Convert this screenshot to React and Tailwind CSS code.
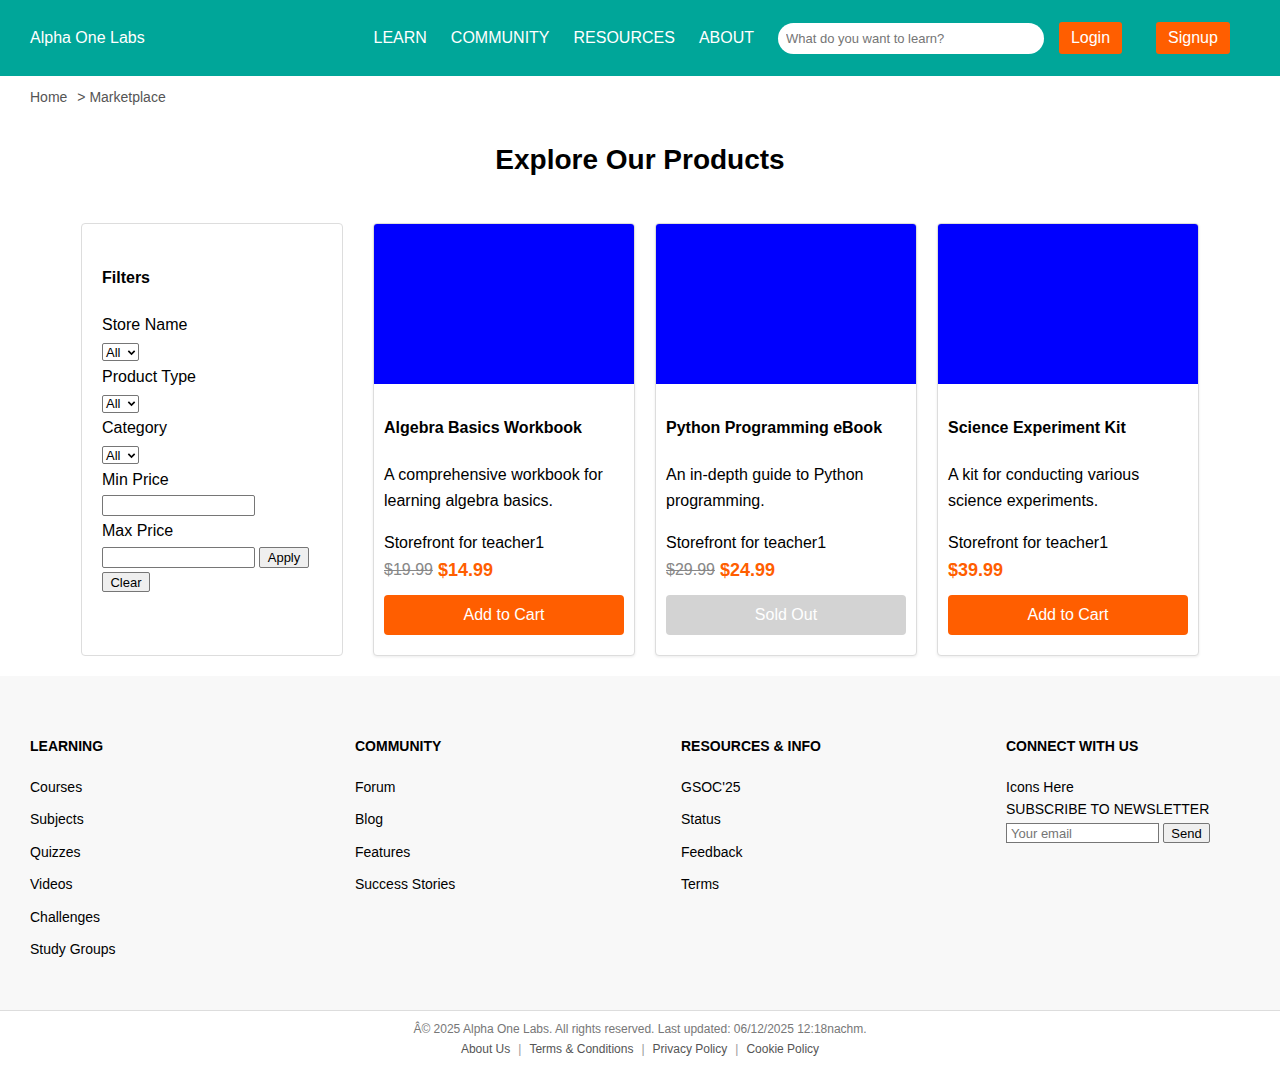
import React from "react"

const products = [
  {
    title: "Algebra Basics Workbook",
    desc: "A comprehensive workbook for learning algebra basics.",
    store: "Storefront for teacher1",
    oldPrice: "$19.99",
    price: "$14.99",
    soldOut: false,
  },
  {
    title: "Python Programming eBook",
    desc: "An in-depth guide to Python programming.",
    store: "Storefront for teacher1",
    oldPrice: "$29.99",
    price: "$24.99",
    soldOut: true,
  },
  {
    title: "Science Experiment Kit",
    desc: "A kit for conducting various science experiments.",
    store: "Storefront for teacher1",
    oldPrice: null,
    price: "$39.99",
    soldOut: false,
  },
]

const footerCols = [
  { title: "Learning", links: ["Courses", "Subjects", "Quizzes", "Videos", "Challenges", "Study Groups"] },
  { title: "Community", links: ["Forum", "Blog", "Features", "Success Stories"] },
  { title: "Resources & Info", links: ["GSOC'25", "Status", "Feedback", "Terms"] },
]

function SelectAll() {
  return (
    <div className="mt-[6px] mb-[3.5px] flex h-[18px] w-[37px] items-center justify-between rounded-[2px] border border-[#767676] bg-white pl-[3px] pr-[2px] text-[13px] leading-none text-black">
      <span>All</span>
      <svg width="9" height="9" viewBox="0 0 10 10" fill="none" stroke="black" strokeWidth="1.8">
        <path d="M1.5 3.2 L5 6.7 L8.5 3.2" />
      </svg>
    </div>
  )
}

function NativeButton({ children, className = "" }) {
  return (
    <button
      className={`rounded-[2px] border border-[#767676] bg-[#efefef] px-[7px] text-[13px] leading-none text-black ${className}`}
    >
      {children}
    </button>
  )
}

function Filters() {
  return (
    <aside className="mr-[30px] w-[262px] shrink-0 rounded border border-[#ddd] bg-white px-5 pt-[45px]">
      <h3 className="text-base font-bold leading-[18px]">Filters</h3>
      <div className="mt-[26px]">
        <label className="block text-base leading-6">Store Name</label>
        <SelectAll />
        <label className="block text-base leading-6">Product Type</label>
        <SelectAll />
        <label className="block text-base leading-6">Category</label>
        <SelectAll />
        <label className="block text-base leading-6">Min Price</label>
        <input className="mt-[3.5px] mb-[2.5px] block h-[21px] w-[153px] rounded-[2px] border border-[#767676] bg-white" />
        <label className="block text-base leading-6">Max Price</label>
        <div className="mt-[4.5px] flex items-center gap-1">
          <input className="block h-[21px] w-[153px] rounded-[2px] border border-[#767676] bg-white" />
          <NativeButton className="h-[21px] w-[50px]">Apply</NativeButton>
        </div>
        <NativeButton className="mt-[4px] h-[20px] w-[48px]">Clear</NativeButton>
      </div>
    </aside>
  )
}

function ProductCard({ p }) {
  return (
    <div className="w-[262px] overflow-hidden rounded border border-[#ddd] bg-white shadow-[0_1px_3px_rgba(0,0,0,0.08)]">
      <div className="h-40 bg-[#0000ff]" />
      <div className="px-2.5 pt-[35px] pb-[20px]">
        <h3 className="text-base font-bold leading-[18px]">{p.title}</h3>
        <p className="mt-[25px] text-base leading-[26px]">{p.desc}</p>
        <p className="mt-[17px] text-base leading-6">{p.store}</p>
        <div className="mt-[5px] flex h-[20px] items-center gap-[5px]">
          {p.oldPrice && <span className="text-base text-[#888] line-through">{p.oldPrice}</span>}
          <span className="text-lg font-bold text-[#ff5e00]">{p.price}</span>
        </div>
        <button
          className={`mt-[15px] h-10 w-full rounded text-base text-white ${
            p.soldOut ? "bg-[#d3d3d3]" : "bg-[#ff5e00]"
          }`}
        >
          {p.soldOut ? "Sold Out" : "Add to Cart"}
        </button>
      </div>
    </div>
  )
}

export default function App() {
  return (
    <div className="min-h-screen bg-white text-black" style={{ fontFamily: '"Liberation Sans", Arial, sans-serif' }}>
      {/* Header */}
      <header className="flex h-[76px] items-center bg-[#00a699] pl-[30px] pr-[50px] text-white">
        <div className="text-base">Alpha One Labs</div>
        <nav className="ml-auto flex items-center gap-[24px] text-base uppercase">
          <a href="#">Learn</a>
          <a href="#">Community</a>
          <a href="#">Resources</a>
          <a href="#">About</a>
        </nav>
        <input
          placeholder="What do you want to learn?"
          className="ml-[24px] h-[31px] w-[266px] rounded-full bg-white px-2 text-[13px] text-black placeholder:text-[#757575] focus:outline-none"
        />
        <button className="ml-[15px] h-8 w-[63px] rounded-[3px] bg-[#ff5e00] text-base text-white">Login</button>
        <button className="ml-[34px] h-8 w-[74px] rounded-[3px] bg-[#ff5e00] text-base text-white">Signup</button>
      </header>

      {/* Breadcrumb */}
      <div className="px-[30px] pt-[13px] text-sm leading-4 text-[#555]">
        <a href="#">Home</a>
        <span className="ml-[10px]">&gt; Marketplace</span>
      </div>

      <h1 className="mt-[39px] text-center text-[28px] font-bold leading-8">Explore Our Products</h1>

      {/* Content */}
      <main className="mx-auto mt-[47px] flex w-[1118px] items-stretch">
        <Filters />
        <div className="flex gap-5">
          {products.map((p) => (
            <ProductCard key={p.title} p={p} />
          ))}
        </div>
      </main>

      {/* Footer */}
      <footer className="mt-5 bg-[#f8f8f8]">
        <div className="grid grid-cols-[325px_326px_325px_1fr] pl-[30px] pt-[62px] pb-[45px]">
          {footerCols.map((col) => (
            <div key={col.title}>
              <h4 className="text-sm font-bold uppercase leading-4">{col.title}</h4>
              <ul className="mt-[17px]">
                {col.links.map((l) => (
                  <li key={l} className="text-sm leading-[32.4px]">
                    <a href="#">{l}</a>
                  </li>
                ))}
              </ul>
            </div>
          ))}
          <div>
            <h4 className="text-sm font-bold uppercase leading-4">Connect with us</h4>
            <div className="mt-[22px] text-sm leading-[22px]">
              <p>Icons Here</p>
              <p>SUBSCRIBE TO NEWSLETTER</p>
              <div className="mt-[3px] flex items-center gap-1">
                <input
                  placeholder="Your email"
                  className="h-5 w-[153px] border border-[#767676] bg-white px-1 text-[13px] leading-none placeholder:text-[#757575]"
                />
                <NativeButton className="h-5 w-[47px]">Send</NativeButton>
              </div>
            </div>
          </div>
        </div>
        <div className="border-t border-[#ddd] bg-white pt-[8px] pb-[13px] text-center text-xs leading-5">
          <p className="text-[#777]">Â© 2025 Alpha One Labs. All rights reserved. Last updated: 06/12/2025 12:18nachm.</p>
          <p className="text-[#555]">
            <a href="#">About Us</a>
            <span className="mx-[8px] text-[#999]">|</span>
            <a href="#">Terms &amp; Conditions</a>
            <span className="mx-[8px] text-[#999]">|</span>
            <a href="#">Privacy Policy</a>
            <span className="mx-[8px] text-[#999]">|</span>
            <a href="#">Cookie Policy</a>
          </p>
        </div>
      </footer>
    </div>
  )
}
